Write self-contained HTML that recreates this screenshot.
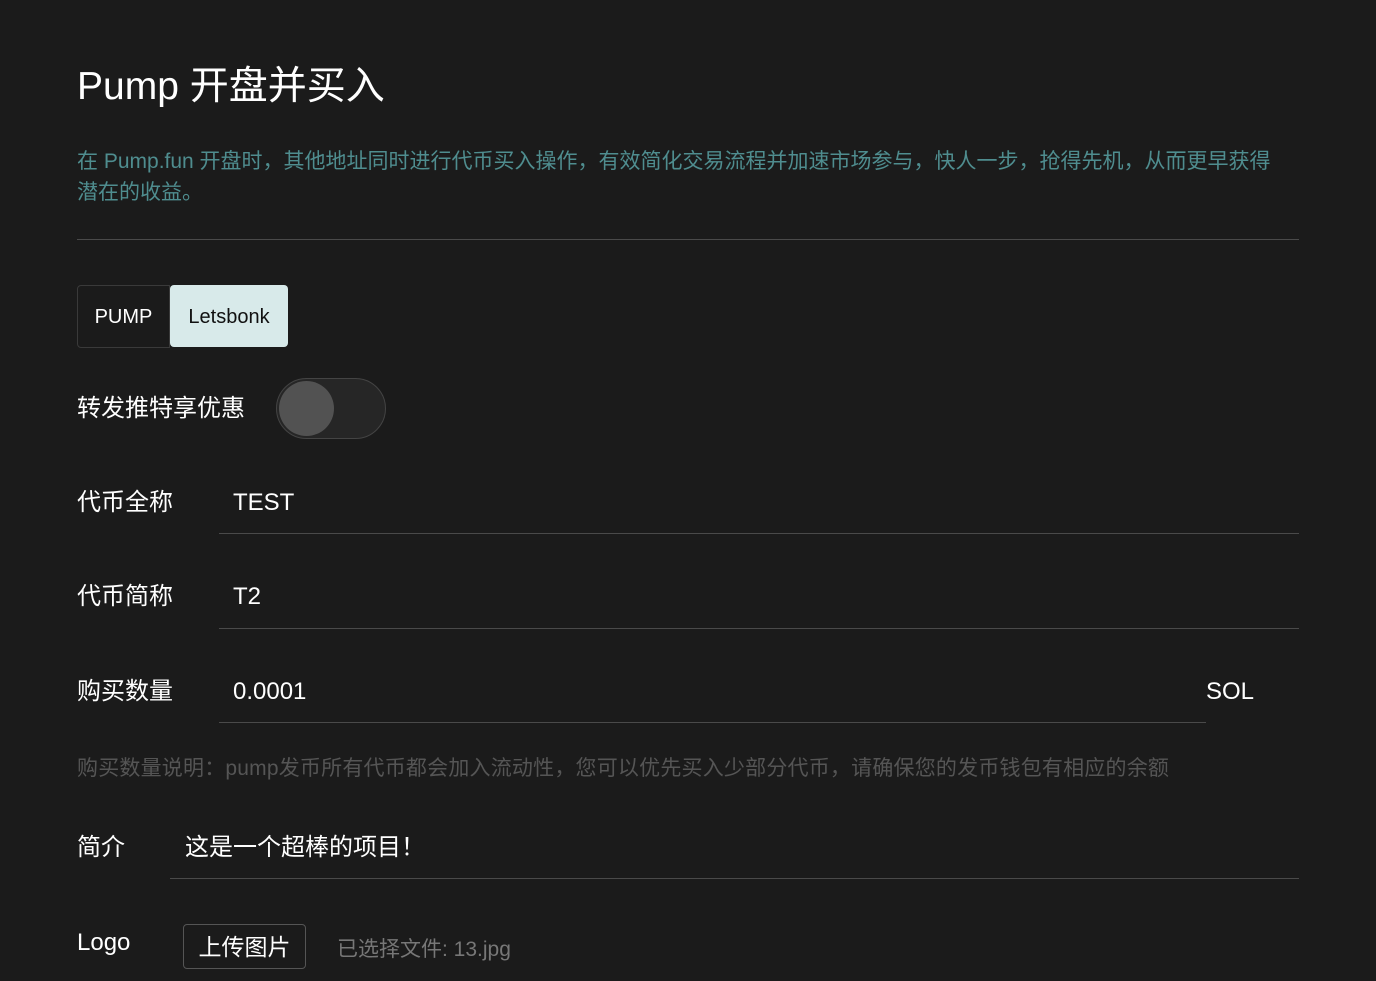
<!DOCTYPE html>
<html><head><meta charset="utf-8"><style>
body{margin:0;width:1376px;height:981px;background:#1b1b1b;color:#fff;font-family:"Liberation Sans","Noto Sans CJK SC",sans-serif;position:relative;overflow:hidden}
.a{position:absolute;white-space:nowrap}
.line{position:absolute;height:1px;background:#4a4a4a}
.lbl{font-size:24px;line-height:30px}
</style></head><body>
<div class="a" style="left:77px;top:62px;font-size:39px;line-height:50px">Pump 开盘并买入</div>
<div class="a" style="left:77px;top:146px;font-size:21px;line-height:31px;color:#4f8d8f;white-space:normal;width:1212px">在 Pump.fun 开盘时，其他地址同时进行代币买入操作，有效简化交易流程并加速市场参与，快人一步，抢得先机，从而更早获得潜在的收益。</div>
<div class="line" style="left:77px;top:239px;width:1222px"></div>
<div class="a" style="left:77px;top:285px;width:91px;height:61px;border:1px solid #3a3a3a;border-radius:4px 0 0 4px;font-size:20px;line-height:63px;text-align:center">PUMP</div>
<div class="a" style="left:170px;top:285px;width:118px;height:62px;background:#d8eaea;border-radius:4px;color:#111;font-size:20px;line-height:64px;text-align:center">Letsbonk</div>
<div class="a lbl" style="left:77px;top:394px">转发推特享优惠</div>
<div class="a" style="left:276px;top:378px;width:108px;height:59px;border:1px solid #444;border-radius:31px;background:#262626"></div>
<div class="a" style="left:279px;top:381px;width:55px;height:55px;border-radius:50%;background:#525252"></div>
<div class="a lbl" style="left:77px;top:488px">代币全称</div>
<div class="a lbl" style="left:233px;top:488px">TEST</div>
<div class="line" style="left:219px;top:533px;width:1080px"></div>
<div class="a lbl" style="left:77px;top:582px">代币简称</div>
<div class="a lbl" style="left:233px;top:582px">T2</div>
<div class="line" style="left:219px;top:628px;width:1080px"></div>
<div class="a lbl" style="left:77px;top:677px">购买数量</div>
<div class="a lbl" style="left:233px;top:677px">0.0001</div>
<div class="a lbl" style="left:1206px;top:677px">SOL</div>
<div class="line" style="left:219px;top:722px;width:987px"></div>
<div class="a" style="left:77px;top:755px;font-size:21px;line-height:27px;color:#555;letter-spacing:0.2px">购买数量说明：pump发币所有代币都会加入流动性，您可以优先买入少部分代币，请确保您的发币钱包有相应的余额</div>
<div class="a lbl" style="left:77px;top:833px">简介</div>
<div class="a lbl" style="left:185px;top:833px">这是一个超棒的项目！</div>
<div class="line" style="left:170px;top:878px;width:1129px"></div>
<div class="a lbl" style="left:77px;top:928px">Logo</div>
<div class="a" style="left:183px;top:924px;width:121px;height:43px;border:1px solid #555;border-radius:4px;font-size:23px;line-height:45px;text-align:center">上传图片</div>
<div class="a" style="left:337px;top:936px;font-size:21px;line-height:27px;color:#777">已选择文件: 13.jpg</div>
</body></html>
